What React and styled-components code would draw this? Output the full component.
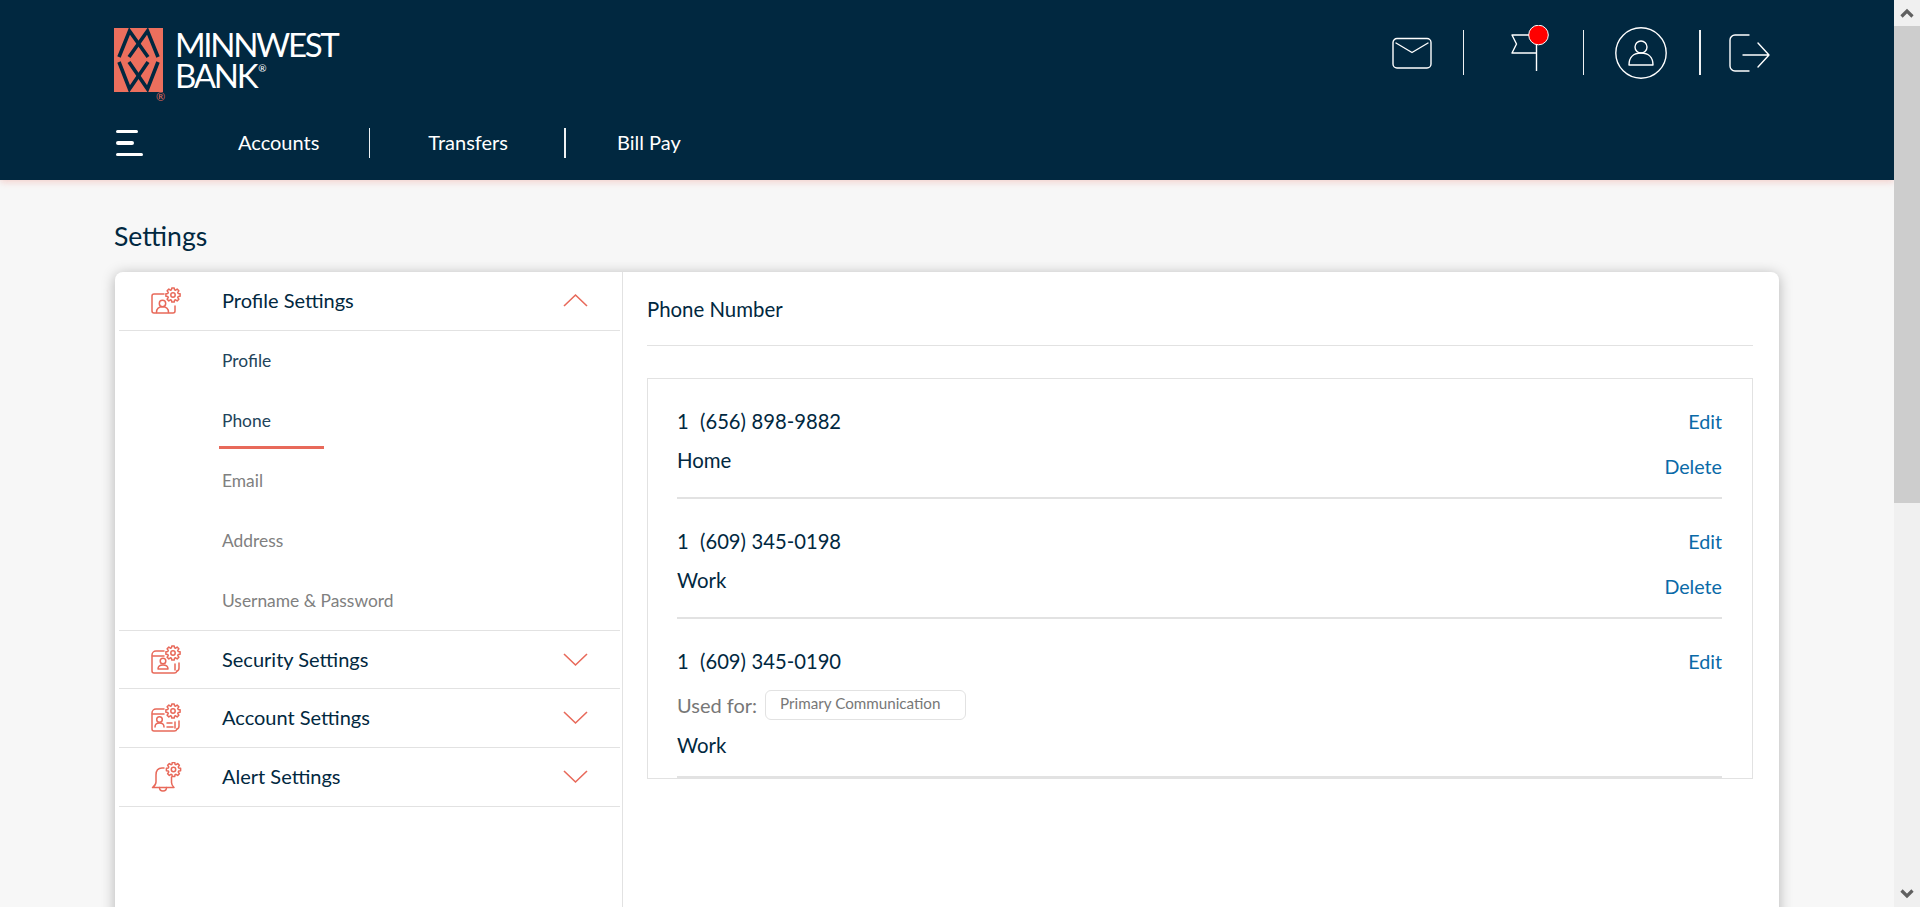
import React from "react";
import styled, { createGlobalStyle } from "styled-components";

const NAVY = "#012840";
const CORAL = "#e8695a";
const LINE = "#e2e2e2";

const Global = createGlobalStyle`
  html, body { height: 100%; overflow: hidden; }
  body { margin: 0; font-family: Lato, "Open Sans", sans-serif; color: ${NAVY}; background: #f7f7f7; }
  #root { height: 100%; }
  * { box-sizing: border-box; }
`;

const Shell = styled.div`
  display: flex;
  height: 100%;
`;
const Page = styled.div`
  flex: 1;
  min-width: 0;
  overflow-y: auto;
  scrollbar-width: none;
`;
const Scrollbar = styled.div`
  width: 26px;
  flex: none;
  background: #f0f0f0;
  display: flex;
  flex-direction: column;
`;
const ScrollButton = styled.div`
  height: 26px;
  flex: none;
  display: flex;
  align-items: center;
  justify-content: center;
`;
const ScrollThumb = styled.div`
  height: 477px;
  flex: none;
  background: #cdcdcd;
`;
const ScrollRest = styled.div`
  flex: 1;
`;

const Header = styled.header`
  height: 180px;
  background: ${NAVY};
  box-shadow: 0 2px 7px rgba(232, 105, 90, 0.28);
  padding: 0 124px 0 114px;
  display: flex;
  flex-direction: column;
  position: relative;
`;
const TopRow = styled.div`
  height: 110px;
  display: flex;
  justify-content: space-between;
  align-items: flex-start;
`;
const Brand = styled.div`
  display: flex;
  padding-top: 28px;
`;
const LogoMark = styled.div`
  width: 49px;
  position: relative;
  height: 72px;
`;
const Reg = styled.span`
  position: absolute;
  left: 42px;
  top: 62px;
  font-size: 11px;
  color: ${CORAL};
`;
const Wordmark = styled.div`
  margin-left: 12px;
  color: #fff;
  font-size: 33px;
  line-height: 31px;
  letter-spacing: -2.3px;
  margin-top: 1px;
  font-weight: 400;
  sup {
    font-size: 10px;
    line-height: 0;
    letter-spacing: 0;
    vertical-align: 16px;
    margin-left: 2px;
  }
`;
const Actions = styled.div`
  display: flex;
  align-items: center;
  height: 105px;
`;
const ActionSlot = styled.div`
  display: flex;
  margin-left: ${(p) => p.$ml}px;
`;
const VRule = styled.span`
  display: block;
  width: ${(p) => p.$w || 1}px;
  height: ${(p) => p.$h}px;
  background: #eef1f3;
  margin-left: ${(p) => p.$ml}px;
`;
const NavRow = styled.nav`
  height: 66px;
  display: flex;
  align-items: center;
`;
const Burger = styled.div`
  width: 124px;
  padding-left: 2px;
  display: flex;
  flex-direction: column;
  gap: 8px;
`;
const BurgerBar = styled.span`
  display: block;
  height: 3.5px;
  border-radius: 2px;
  background: #fff;
  width: ${(p) => p.$w}px;
`;
const NavLink = styled.a`
  color: #fff;
  font-size: 20px;
  font-weight: 400;
  white-space: nowrap;
  margin-left: ${(p) => p.$ml || 0}px;
  padding-bottom: 2px;
`;

const Main = styled.main`
  padding: 0 115px;
  height: 1446px;
`;
const Title = styled.h1`
  margin: 0;
  padding-top: 38px;
  height: 92px;
  font-size: 26.6px;
  line-height: 36px;
  font-weight: 400;
  margin-left: -1px;
`;
const Card = styled.section`
  background: #fff;
  border-radius: 8px;
  box-shadow: 0 2px 14px rgba(0, 0, 0, 0.28);
  display: flex;
  height: 1300px;
`;
const Sidebar = styled.aside`
  width: 508px;
  flex: none;
  border-right: 1px solid ${LINE};
  padding: 0 2px 0 4px;
`;
const GroupHead = styled.div`
  height: ${(p) => p.$h}px;
  border-bottom: 1px solid ${LINE};
  display: flex;
  align-items: center;
`;
const GroupIcon = styled.span`
  display: flex;
  width: 103px;
  padding-left: 31px;
  flex: none;
`;
const GroupTitle = styled.span`
  flex: 1;
  font-size: 20px;
  padding-bottom: 2px;
`;
const Chevron = styled.svg`
  width: 25px;
  height: 14px;
  margin-right: 32px;
  margin-bottom: ${(p) => (p.$open ? 2 : 0)}px;
  flex: none;
`;
const SubList = styled.ul`
  list-style: none;
  margin: 0;
  padding: 0;
  height: 300px;
  border-bottom: 1px solid ${LINE};
`;
const SubItem = styled.li`
  height: 60px;
  padding: 0 0 2px 103px;
  display: flex;
  align-items: center;
  font-size: 17.4px;
  color: ${(p) => (p.$muted ? "#808080" : "#22435a")};
`;
const SubLabel = styled.span`
  position: relative;
  &::after {
    content: ${(p) => (p.$active ? '""' : "none")};
    position: absolute;
    left: -3px;
    top: 36px;
    width: 105px;
    height: 3px;
    background: ${CORAL};
  }
`;
const Content = styled.div`
  flex: 1;
  padding: 0 26px 0 24px;
`;
const PanelTitle = styled.h2`
  margin: 0;
  height: 74px;
  border-bottom: 1px solid ${LINE};
  font-size: 20.4px;
  font-weight: 400;
  line-height: 75px;
`;
const PhoneBox = styled.div`
  margin-top: 32px;
  border: 1px solid ${LINE};
  padding: 0 30px 0 29px;
  height: 401px;
  overflow: hidden;
`;
const PhoneRow = styled.div`
  display: flex;
  justify-content: space-between;
  height: ${(p) => p.$h}px;
  border-bottom: 2px solid ${LINE};
  padding-top: 31px;
`;
const PhoneInfo = styled.div`
  display: flex;
  flex-direction: column;
  margin-top: -1px;
`;
const Number = styled.div`
  font-size: 20.2px;
  line-height: 24px;
  white-space: pre;
  word-spacing: 0.5px;
`;
const PhoneType = styled.div`
  font-size: 20.4px;
  line-height: 24px;
  margin-top: ${(p) => p.$mt}px;
`;
const UsedFor = styled.div`
  display: flex;
  align-items: center;
  margin-top: 17px;
  height: 30px;
  font-size: 20px;
  color: #777;
`;
const Chip = styled.span`
  margin-left: 8px;
  width: 201px;
  height: 30px;
  border: 1px solid ${LINE};
  border-radius: 6px;
  padding-left: 14px;
  font-size: 15.2px;
  line-height: 24px;
`;
const Links = styled.div`
  display: flex;
  flex-direction: column;
  align-items: flex-end;
  gap: 21px;
`;
const ActionLink = styled.a`
  color: #0a6aa8;
  font-size: 19.7px;
  line-height: 24px;
`;

const gearPath = (cx, cy, R, r, teeth = 8) => {
  const pts = [];
  const step = (Math.PI * 2) / teeth;
  for (let i = 0; i < teeth; i++) {
    const a = i * step - Math.PI / 2;
    [[-0.3, r], [-0.17, R], [0.17, R], [0.3, r]].forEach(([o, rad]) => {
      const t = a + o * step * 1.25;
      pts.push(`${(cx + rad * Math.cos(t)).toFixed(2)} ${(cy + rad * Math.sin(t)).toFixed(2)}`);
    });
  }
  return `M${pts.join("L")}Z`;
};

const Gear = ({ x = 23, y = 9 }) => (
  <>
    <path d={gearPath(x, y, 7.2, 5.4)} />
    <circle cx={x} cy={y} r="2.2" />
  </>
);

const IconSvg = ({ children }) => (
  <svg width="33" height="30" viewBox="0 0 33 30" fill="none" stroke={CORAL} strokeWidth="1.5" strokeLinecap="round" strokeLinejoin="round">
    {children}
  </svg>
);

const ProfileIcon = () => (
  <IconSvg>
    <path d="M14 8H4a2 2 0 0 0-2 2v15a2 2 0 0 0 2 2h19a2 2 0 0 0 2-2v-5" />
    <circle cx="12.5" cy="17.5" r="3.2" />
    <path d="M6.5 26.5c0-4 2.5-5.8 6-5.8s6 1.8 6 5.8" />
    <Gear />
  </IconSvg>
);
const SecurityIcon = () => (
  <IconSvg>
    <path d="M14 6H6a4 4 0 0 0-4 4v16a2 2 0 0 0 2 2h20a3 3 0 0 0 3-2" />
    <path d="M2.5 11H14" />
    <path d="M25 19v6M29 18v5a3 3 0 0 1-2 3" />
    <circle cx="13" cy="16" r="2.8" />
    <path d="M8 24c0-3 2-4 5-4s5 1 5 4z" />
    <Gear x={23} y={8} />
  </IconSvg>
);
const AccountIcon = () => (
  <IconSvg>
    <path d="M14 6H6a4 4 0 0 0-4 4v16a2 2 0 0 0 2 2h20a3 3 0 0 0 3-2" />
    <path d="M2.5 11H14" />
    <path d="M25 19v6M29 18v5a3 3 0 0 1-2 3" />
    <circle cx="9.5" cy="16.5" r="2.8" />
    <path d="M5 24c0-3 1.5-4 4.5-4s4.5 1 4.5 4M17 20h5M17 24h6" />
    <Gear x={23} y={8} />
  </IconSvg>
);
const AlertIcon = () => (
  <IconSvg>
    <path d="M14 6h-2c-4 0-6 3-6 7v7c0 2-1.5 4-3.5 5.5h21.500c-1.5-1.5-2.5-3-2.5-5V15" />
    <path d="M9.5 25.5c0 2 1.5 3.5 3.5 3.5s3.5-1.5 3.5-3.5" />
    <Gear x={23.5} y={7.5} />
  </IconSvg>
);

const groups = [
  { title: "Profile Settings", Icon: ProfileIcon, h: 59, open: true },
  { title: "Security Settings", Icon: SecurityIcon, h: 58 },
  { title: "Account Settings", Icon: AccountIcon, h: 59 },
  { title: "Alert Settings", Icon: AlertIcon, h: 59 },
];
const subItems = [
  { label: "Profile" },
  { label: "Phone", active: true },
  { label: "Email", muted: true },
  { label: "Address", muted: true },
  { label: "Username & Password", muted: true },
];

const LogoSvg = () => (
  <svg width="49" height="64" viewBox="0 0 49 64">
    <rect width="49" height="64" fill="#ec6f5d" />
    <g fill="none" stroke={NAVY} strokeWidth="3.6">
      <path d="M5 29 L15.5 3 L34 29" />
      <path d="M15 29 L33.5 3 L44 29" />
      <path d="M5 34 L15.5 61 L34 34" />
      <path d="M15 34 L33.5 61 L44 34" />
    </g>
  </svg>
);

const ScrollArrow = ({ up }) => (
  <svg width="14" height="10" viewBox="0 0 14 10" fill="none" stroke="#606060" strokeWidth="3.2">
    <path d={up ? "M1.5 8.5 L7 3 L12.5 8.5" : "M1.5 1.5 L7 7 L12.5 1.5"} />
  </svg>
);

export default function App() {
  return (
    <Shell>
      <Global />
      <Page>
        <Header>
          <TopRow>
            <Brand>
              <LogoMark>
                <LogoSvg />
                <Reg>®</Reg>
              </LogoMark>
              <Wordmark>
                MINNWEST
                <br />
                BANK<sup>®</sup>
              </Wordmark>
            </Brand>
            <Actions>
              <ActionSlot $ml={0}>
                <svg width="40" height="32" viewBox="0 0 40 32" fill="none" stroke="#fff" strokeWidth="1.4" strokeLinecap="round" strokeLinejoin="round">
                  <rect x="1" y="1.5" width="38" height="29.5" rx="4" />
                  <path d="M4 6 L20 15.5 L36 6" />
                </svg>
              </ActionSlot>
              <VRule $h={45} $ml={31} />
              <ActionSlot $ml={47}>
                <svg width="40" height="56" viewBox="0 0 40 56" fill="none">
                  <path d="M25.5 10H1l4.5 9L1 28h24.500M25.5 10v36" stroke="#fff" strokeWidth="1.4" strokeLinejoin="round" />
                  <circle cx="27.5" cy="10" r="9.8" fill="#f00" stroke="#fff" strokeWidth="1" />
                </svg>
              </ActionSlot>
              <VRule $h={45} $ml={32} />
              <ActionSlot $ml={30}>
                <svg width="54" height="54" viewBox="0 0 54 54" fill="none" stroke="#fff" strokeWidth="1.4" strokeLinejoin="round">
                  <circle cx="27" cy="27" r="25.2" />
                  <circle cx="27" cy="21" r="6" />
                  <path d="M15 39c0-8 5-12 12-12s12 4 12 12z" />
                </svg>
              </ActionSlot>
              <VRule $w={2} $h={45} $ml={31} />
              <ActionSlot $ml={28}>
                <svg width="41" height="38" viewBox="0 0 41 38" fill="none" stroke="#fff" strokeWidth="1.4" strokeLinecap="round" strokeLinejoin="round">
                  <path d="M20 1H6a5 5 0 0 0-5 5v26a5 5 0 0 0 5 5h14" />
                  <path d="M14 21H39.5M29 9 L40 21 L29 33" />
                </svg>
              </ActionSlot>
            </Actions>
          </TopRow>
          <NavRow>
            <Burger>
              <BurgerBar $w={22} />
              <BurgerBar $w={18} />
              <BurgerBar $w={27} />
            </Burger>
            <NavLink>Accounts</NavLink>
            <VRule $h={30} $ml={50} />
            <NavLink $ml={58}>Transfers</NavLink>
            <VRule $w={2} $h={30} $ml={56} />
            <NavLink $ml={51}>Bill Pay</NavLink>
          </NavRow>
        </Header>
        <Main>
          <Title>Settings</Title>
          <Card>
            <Sidebar>
              {groups.map(({ title, Icon, h, open }) => (
                <div key={title}>
                  <GroupHead $h={h}>
                    <GroupIcon>
                      <Icon />
                    </GroupIcon>
                    <GroupTitle>{title}</GroupTitle>
                    <Chevron $open={open} viewBox="0 0 25 14" fill="none" stroke={CORAL} strokeWidth="1.6">
                      <path d={open ? "M1 13 L12.5 2 L24 13" : "M1 1 L12.5 12 L24 1"} />
                    </Chevron>
                  </GroupHead>
                  {open && (
                    <SubList>
                      {subItems.map((s) => (
                        <SubItem key={s.label} $muted={s.muted}>
                          <SubLabel $active={s.active}>{s.label}</SubLabel>
                        </SubItem>
                      ))}
                    </SubList>
                  )}
                </div>
              ))}
            </Sidebar>
            <Content>
              <PanelTitle>Phone Number</PanelTitle>
              <PhoneBox>
                <PhoneRow $h={120}>
                  <PhoneInfo>
                    <Number>1  (656) 898-9882</Number>
                    <PhoneType $mt={15}>Home</PhoneType>
                  </PhoneInfo>
                  <Links>
                    <ActionLink>Edit</ActionLink>
                    <ActionLink>Delete</ActionLink>
                  </Links>
                </PhoneRow>
                <PhoneRow $h={120}>
                  <PhoneInfo>
                    <Number>1  (609) 345-0198</Number>
                    <PhoneType $mt={15}>Work</PhoneType>
                  </PhoneInfo>
                  <Links>
                    <ActionLink>Edit</ActionLink>
                    <ActionLink>Delete</ActionLink>
                  </Links>
                </PhoneRow>
                <PhoneRow $h={159}>
                  <PhoneInfo>
                    <Number>1  (609) 345-0190</Number>
                    <UsedFor>
                      Used for:
                      <Chip>Primary Communication</Chip>
                    </UsedFor>
                    <PhoneType $mt={13}>Work</PhoneType>
                  </PhoneInfo>
                  <Links>
                    <ActionLink>Edit</ActionLink>
                  </Links>
                </PhoneRow>
              </PhoneBox>
            </Content>
          </Card>
        </Main>
      </Page>
      <Scrollbar>
        <ScrollButton>
          <ScrollArrow up />
        </ScrollButton>
        <ScrollThumb />
        <ScrollRest />
        <ScrollButton>
          <ScrollArrow />
        </ScrollButton>
      </Scrollbar>
    </Shell>
  );
}
